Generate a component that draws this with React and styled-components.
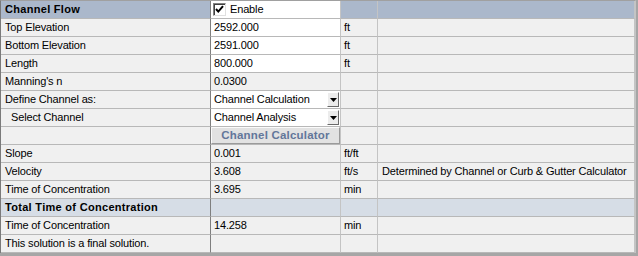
import React from 'react'
import styled, { createGlobalStyle } from 'styled-components'

const Global = createGlobalStyle`
html, body {
  margin: 0;
  padding: 0;
  background: #a6a6a6;
}
body {
  width: 638px;
  height: 256px;
  overflow: hidden;
  font-family: 'Liberation Sans', Arial, sans-serif;
  font-size: 11px;
  letter-spacing: -0.15px;
  color: #000;
}
`

const tones = {
  plain: '#f0f0f0',
  edit: '#ffffff',
  head: '#abb8cb',
  sub: '#d6dde6',
}

const Sheet = styled.div`
width: 636px;
border-top: 1px solid #a0a0a0;
border-left: 1px solid #7a7a7a;
border-right: 1px solid #c4c4c4;
background: #f0f0f0;
box-sizing: border-box;
`

const Row = styled.div`
display: grid;
grid-template-columns: 210px 130px 37px 1fr;
height: 18px;
`

const Cell = styled.div`
box-sizing: border-box;
height: 18px;
border-bottom: 1px solid #b8b8b8;
border-right: 1px solid ${props => props.$divider ? '#7f7f7f' : '#c4c4c4'};
background: ${props => tones[props.$tone || 'plain']};
padding: 0 0 0 ${props => props.$indent ? '10px' : '4px'};
line-height: 17px;
white-space: nowrap;
overflow: hidden;
font-weight: ${props => props.$strong ? 'bold' : 'normal'};
letter-spacing: ${props => props.$strong ? '0.3px' : '-0.15px'};
display: flex;
align-items: center;
position: relative;
`

const ValueCell = styled(Cell)`
padding-left: 3px;
`

const CheckWrap = styled.label`
display: flex;
align-items: center;
gap: 4px;
margin-left: -1px;
`

const CheckBox = styled.span`
box-sizing: border-box;
width: 13px;
height: 13px;
background: #fff;
border-top: 1px solid #808080;
border-left: 1px solid #808080;
border-right: 1px solid #e0e0e0;
border-bottom: 1px solid #e0e0e0;
box-shadow: inset 1px 1px 0 #404040;
display: flex;
align-items: center;
justify-content: center;
`

const SelectText = styled.span`
flex: 1;
`

const DropButton = styled.span`
position: absolute;
right: 1px;
top: 1px;
width: 12px;
height: 15px;
box-sizing: border-box;
background: #ececec;
border-top: 1px solid #fff;
border-left: 1px solid #fff;
border-right: 1px solid #6a6a6a;
border-bottom: 1px solid #6a6a6a;
display: flex;
align-items: center;
justify-content: center;
`

const CalcButton = styled.button`
box-sizing: border-box;
width: 100%;
height: 17px;
margin: 0;
padding: 0;
background: #e2e2e2;
border-top: 1px solid #fbfbfb;
border-left: 1px solid #fbfbfb;
border-right: 1px solid #9a9a9a;
border-bottom: 1px solid #9a9a9a;
font-family: 'Liberation Sans', Arial, sans-serif;
font-size: 11.5px;
font-weight: bold;
letter-spacing: 0.2px;
color: #62769a;
line-height: 15px;
`

const ButtonCell = styled(Cell)`
padding: 0;
align-items: flex-start;
`

const Check = () => (
  <svg width="9" height="9" viewBox="0 0 9 9">
    <path d="M1 4 L3.3 6.6 L8 1.2" fill="none" stroke="#000" strokeWidth="2" />
  </svg>
)

const Arrow = () => (
  <svg width="7" height="4" viewBox="0 0 7 4">
    <path d="M0 0 H7 L3.5 4 Z" fill="#000" />
  </svg>
)

const rows = [
  { label: 'Top Elevation', value: '2592.000', unit: 'ft', edit: true },
  { label: 'Bottom Elevation', value: '2591.000', unit: 'ft', edit: true },
  { label: 'Length', value: '800.000', unit: 'ft', edit: true },
  { label: "Manning's n", value: '0.0300' },
  { label: 'Define Channel as:', select: 'Channel Calculation' },
  { label: 'Select Channel', indent: true, select: 'Channel Analysis' },
  { button: 'Channel Calculator' },
  { label: 'Slope', value: '0.001', unit: 'ft/ft' },
  { label: 'Velocity', value: '3.608', unit: 'ft/s', note: 'Determined by Channel or Curb & Gutter Calculator' },
  { label: 'Time of Concentration', value: '3.695', unit: 'min' },
  { section: 'Total Time of Concentration' },
  { label: 'Time of Concentration', value: '14.258', unit: 'min' },
  { label: 'This solution is a final solution.' },
]

const DataRow = ({ row }) => {
  if (row.section) {
    return (
      <Row>
        <Cell $divider $tone="sub" $strong>{row.section}</Cell>
        <Cell $tone="sub" />
        <Cell $tone="sub" />
        <Cell $tone="sub" />
      </Row>
    )
  }
  let value
  if (row.button) {
    value = (
      <ButtonCell>
        <CalcButton>{row.button}</CalcButton>
      </ButtonCell>
    )
  } else if (row.select) {
    value = (
      <ValueCell $tone="edit">
        <SelectText>{row.select}</SelectText>
        <DropButton><Arrow /></DropButton>
      </ValueCell>
    )
  } else {
    value = <ValueCell $tone={row.edit ? 'edit' : 'plain'}>{row.value}</ValueCell>
  }
  return (
    <Row>
      <Cell $divider $indent={row.indent}>{row.label}</Cell>
      {value}
      <ValueCell>{row.unit}</ValueCell>
      <Cell>{row.note}</Cell>
    </Row>
  )
}

const App = () => (
  <>
    <Global />
    <Sheet>
      <Row>
        <Cell $divider $tone="head" $strong>Channel Flow</Cell>
        <ValueCell $tone="edit">
          <CheckWrap>
            <CheckBox><Check /></CheckBox>
            <span>Enable</span>
          </CheckWrap>
        </ValueCell>
        <Cell $tone="head" />
        <Cell $tone="head" />
      </Row>
      {rows.map((row, i) => <DataRow key={i} row={row} />)}
    </Sheet>
  </>
)

export default App
